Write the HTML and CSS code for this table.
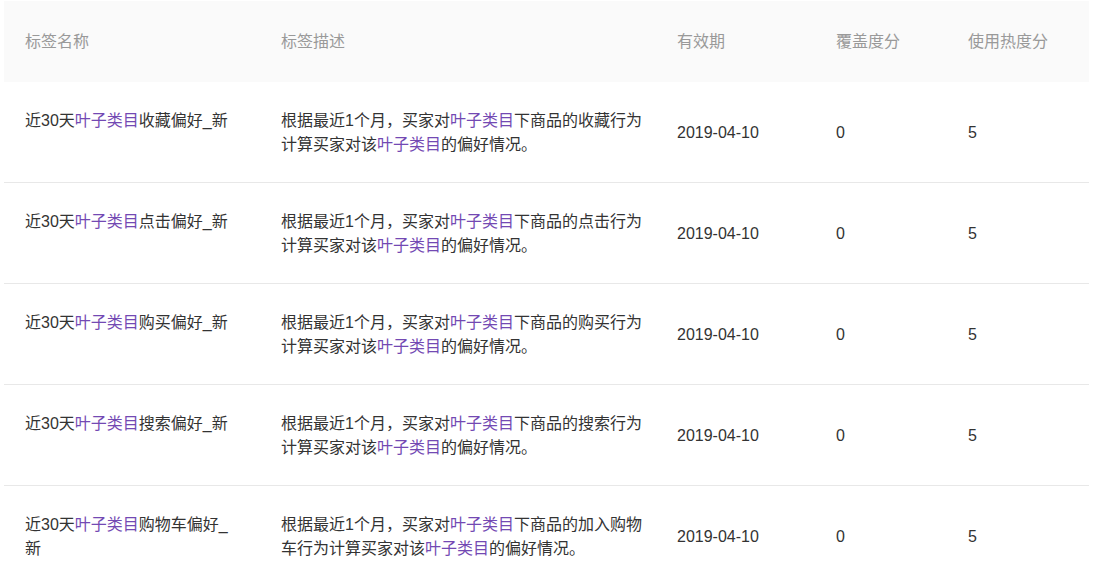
FILE: index.html
```html
<!DOCTYPE html>
<html lang="zh-CN">
<head>
<meta charset="utf-8">
<title>标签列表</title>
<link rel="stylesheet" href="styles.css">
</head>
<body>
<table class="tag-table">
  <colgroup>
    <col class="c-name">
    <col class="c-desc">
    <col class="c-date">
    <col class="c-cover">
    <col class="c-heat">
  </colgroup>
  <thead>
    <tr>
      <th>标签名称</th>
      <th>标签描述</th>
      <th>有效期</th>
      <th>覆盖度分</th>
      <th>使用热度分</th>
    </tr>
  </thead>
  <tbody>
    <tr>
      <td class="name">近30天<span class="hl">叶子类目</span>收藏偏好_新</td>
      <td class="desc">根据最近1个月，买家对<span class="hl">叶子类目</span>下商品的收藏行为计算买家对该<span class="hl">叶子类目</span>的偏好情况。</td>
      <td>2019-04-10</td>
      <td>0</td>
      <td>5</td>
    </tr>
    <tr>
      <td class="name">近30天<span class="hl">叶子类目</span>点击偏好_新</td>
      <td class="desc">根据最近1个月，买家对<span class="hl">叶子类目</span>下商品的点击行为计算买家对该<span class="hl">叶子类目</span>的偏好情况。</td>
      <td>2019-04-10</td>
      <td>0</td>
      <td>5</td>
    </tr>
    <tr>
      <td class="name">近30天<span class="hl">叶子类目</span>购买偏好_新</td>
      <td class="desc">根据最近1个月，买家对<span class="hl">叶子类目</span>下商品的购买行为计算买家对该<span class="hl">叶子类目</span>的偏好情况。</td>
      <td>2019-04-10</td>
      <td>0</td>
      <td>5</td>
    </tr>
    <tr>
      <td class="name">近30天<span class="hl">叶子类目</span>搜索偏好_新</td>
      <td class="desc">根据最近1个月，买家对<span class="hl">叶子类目</span>下商品的搜索行为计算买家对该<span class="hl">叶子类目</span>的偏好情况。</td>
      <td>2019-04-10</td>
      <td>0</td>
      <td>5</td>
    </tr>
    <tr>
      <td class="name">近30天<span class="hl">叶子类目</span>购物车偏好_新</td>
      <td class="desc">根据最近1个月，买家对<span class="hl">叶子类目</span>下商品的加入购物车行为计算买家对该<span class="hl">叶子类目</span>的偏好情况。</td>
      <td>2019-04-10</td>
      <td>0</td>
      <td>5</td>
    </tr>
  </tbody>
</table>
</body>
</html>
```
FILE: styles.css
```css
html {
  overflow: hidden;
}
body {
  margin: 0;
  background: #fff;
  font-family: "Liberation Sans", "Noto Sans CJK SC", sans-serif;
  font-size: 16px;
  color: #333;
}
.tag-table {
  margin: 1px 0 0 4px;
  width: 1085px;
  table-layout: fixed;
  border-collapse: collapse;
  border-spacing: 0;
}
.c-name { width: 256px; }
.c-desc { width: 396px; }
.c-date { width: 159px; }
.c-cover { width: 132px; }
.c-heat { width: 142px; }

.tag-table th {
  background: #fafafa;
  color: #999;
  font-weight: normal;
  text-align: left;
  height: 81px;
  padding: 0 16px 0 21px;
  line-height: 24px;
  vertical-align: middle;
  box-sizing: border-box;
}
.tag-table td {
  padding: 27px 16px 25px 21px;
  line-height: 24px;
  vertical-align: middle;
  border-bottom: 1px solid #e8e8e8;
  word-break: break-all;
}
.tag-table td.name {
  vertical-align: top;
  padding-right: 25px;
}
.tag-table td.desc {
  vertical-align: top;
  padding-right: 7px;
}
.hl {
  color: #7349b3;
}
```
